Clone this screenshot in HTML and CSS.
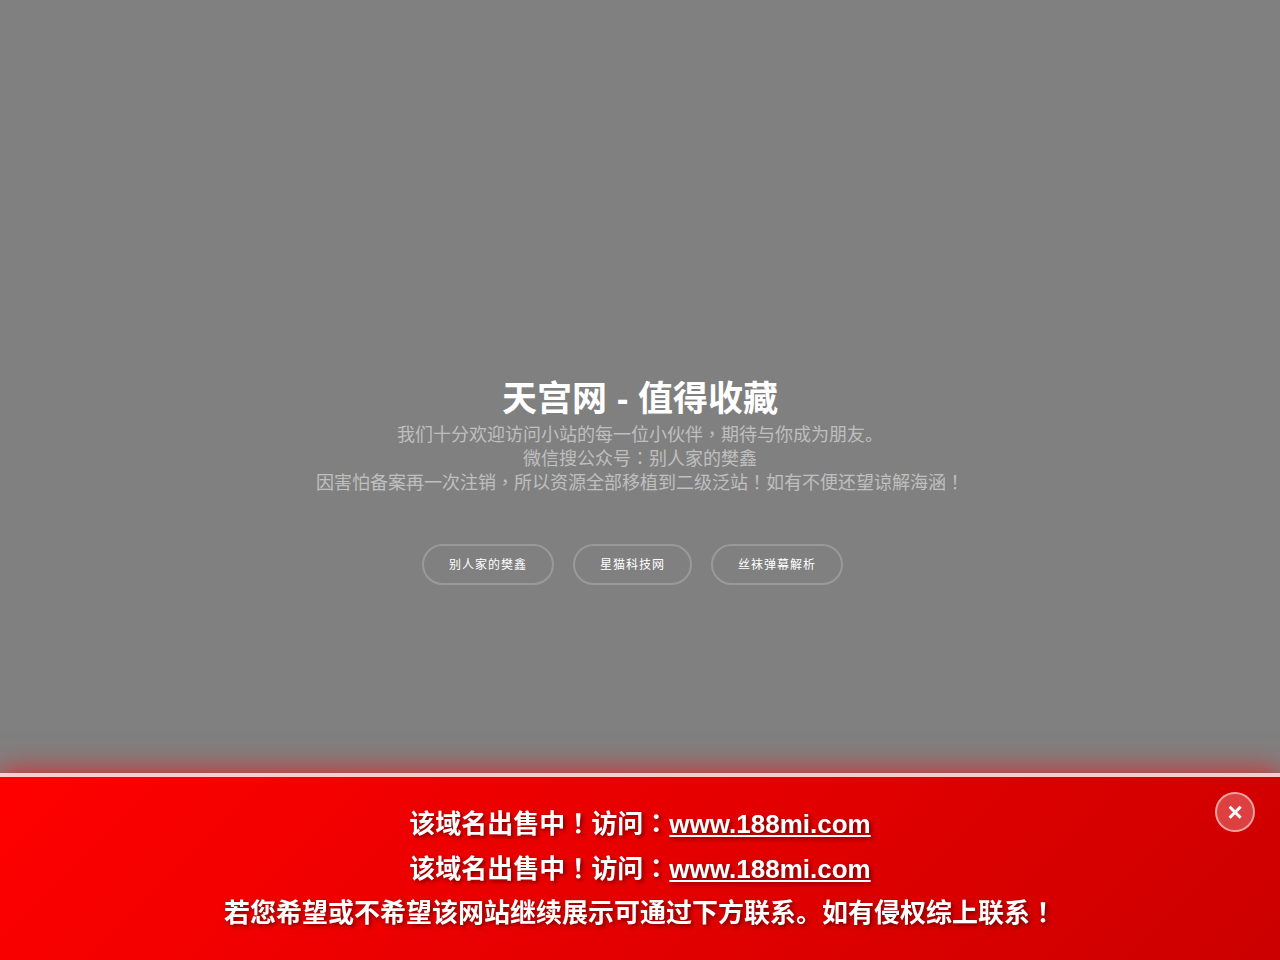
FILE: index.html
```
<!DOCTYPE html>
<html lang="zh-CN">
<head>
<meta charset="utf-8">
<title>天宫网 - 值得收藏</title>
<link rel="stylesheet" href="styles.css">
</head>
<body>
<main class="hero">
  <h1 class="title">天宫网 - 值得收藏</h1>
  <p class="intro">我们十分欢迎访问小站的每一位小伙伴<span class="mark" lang="zh-TW">，</span>期待与你成为朋友。<br>微信搜公众号<span class="mark" lang="zh-TW">：</span>别人家的樊鑫<br>因害怕备案再一次注销<span class="mark" lang="zh-TW">，</span>所以资源全部移植到二级泛站<span class="mark" lang="zh-TW">！</span>如有不便还望谅解海涵<span class="mark" lang="zh-TW">！</span></p>
  <nav class="links">
    <a class="pill" href="#">别人家的樊鑫</a>
    <a class="pill" href="#">星猫科技网</a>
    <a class="pill" href="#">丝袜弹幕解析</a>
  </nav>
</main>
<aside class="banner">
  <p>该域名出售中<span class="mark" lang="zh-TW">！</span>访问<span class="mark" lang="zh-TW">：</span><a href="#">www.188mi.com</a></p>
  <p>该域名出售中<span class="mark" lang="zh-TW">！</span>访问<span class="mark" lang="zh-TW">：</span><a href="#">www.188mi.com</a></p>
  <p>若您希望或不希望该网站继续展示可通过下方联系。如有侵权综上联系<span class="mark" lang="zh-TW">！</span></p>
  <button class="close" type="button" aria-label="关闭">×</button>
</aside>
</body>
</html>
```
FILE: styles.css
```
* { box-sizing: border-box; }
body {
  margin: 0;
  min-height: 100vh;
  background: #808080;
  color: #fff;
  font-family: "Liberation Sans", "Noto Sans CJK SC", sans-serif;
  text-align: center;
}
.mark { font-family: "Liberation Sans", "Noto Sans CJK TC", sans-serif; }
.hero {
  min-height: 100vh;
  display: flex;
  flex-direction: column;
  align-items: center;
  justify-content: center;
}
.title { margin: 0; font-size: 35px; line-height: 48px; font-weight: 700; }
.intro { margin: 0; font-size: 18px; line-height: 24px; color: rgba(255, 255, 255, 0.5); }
.links { display: flex; gap: 19px; margin-top: 49px; padding-right: 15px; }
.pill {
  padding: 2px 25px 0;
  border: 2px solid rgba(255, 255, 255, 0.2);
  border-radius: 21px;
  color: #fff;
  font-size: 12px;
  line-height: 35px;
  letter-spacing: 1px;
  text-decoration: none;
}
.banner {
  position: fixed;
  left: 0;
  right: 0;
  bottom: 0;
  padding: 25px 20px;
  border-top: 4px solid rgba(255, 255, 255, 0.8);
  background: linear-gradient(135deg, #ff0000, #cc0000);
  box-shadow: 0 -4px 25px rgba(255, 0, 0, 0.6);
  font-size: 26px;
  line-height: 1.7;
  font-weight: 700;
  text-shadow: 2px 2px 4px rgba(0, 0, 0, 0.5);
}
.banner p { margin: 0; }
.banner a { color: #fff; }
.close {
  position: absolute;
  top: 15px;
  right: 25px;
  width: 40px;
  height: 40px;
  padding: 0;
  border: 2px solid rgba(255, 255, 255, 0.5);
  border-radius: 50%;
  background: rgba(255, 255, 255, 0.25);
  color: #fff;
  font-family: inherit;
  font-size: 26px;
  font-weight: 700;
  line-height: 36px;
}
```
